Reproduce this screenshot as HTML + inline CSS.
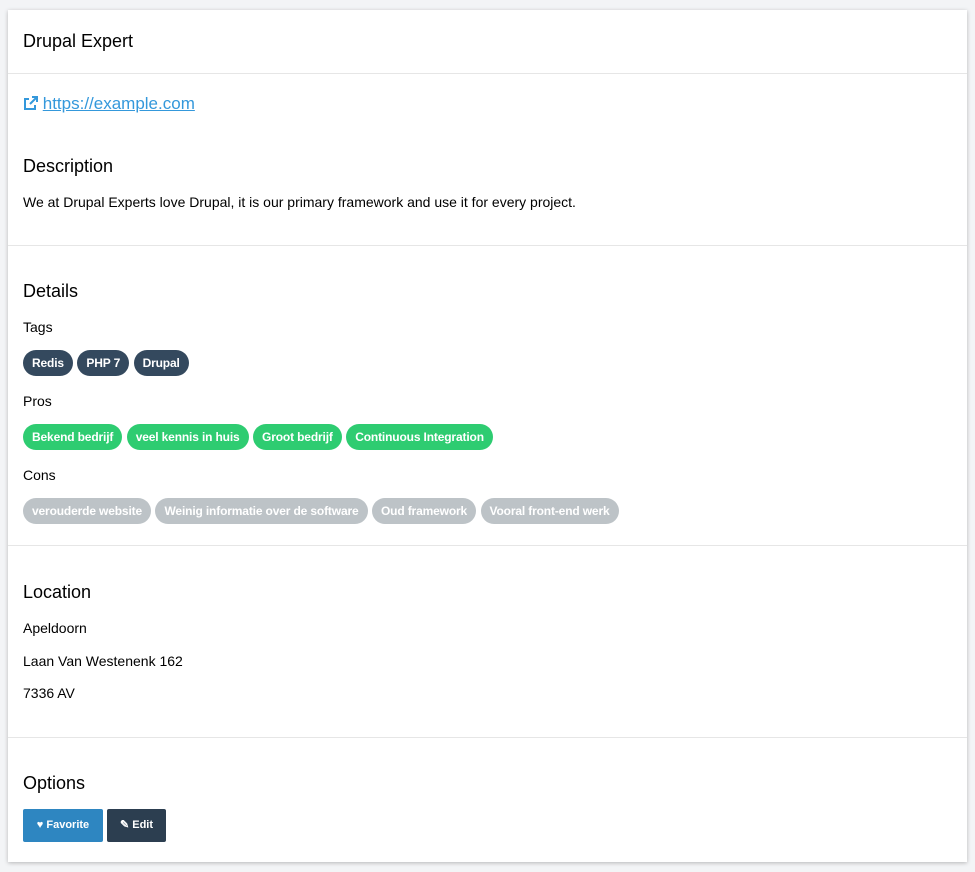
<!DOCTYPE html>
<html><head><style>
body{margin:0;background:#f3f4f6;font-family:"Liberation Sans",sans-serif;color:#000;}
.card{position:absolute;left:8px;top:10px;width:959px;height:852px;background:#fff;box-shadow:0 1px 4px rgba(0,0,0,.25);}
.a{position:absolute;left:15px;white-space:nowrap;}
.hr{position:absolute;left:0;right:0;height:1px;background:#e6e6e6;}
.h{font-size:18px;}
.t{font-size:14px;}
.b{display:inline-block;height:26px;line-height:26px;padding:0 9px;border-radius:13px;color:#fff;font-size:12px;font-weight:bold;letter-spacing:-0.15px;margin-right:0;}
.d{background:#34495e}.g{background:#2ecc71}.s{background:#bdc3c7}
.btn{position:absolute;top:799px;height:33px;line-height:33px;color:#fff;font-size:11px;font-weight:bold;border-radius:2px;text-align:center;}
</style></head><body>
<div class="card">
<div class="a h" style="top:21px;font-size:18px">Drupal Expert</div>
<div class="hr" style="top:63px"></div>
<div class="a" style="top:84px;font-size:17px;color:#3498db"><svg width="15" height="14" viewBox="0 0 15 14" style="vertical-align:-1px"><path d="M6 3H2v10h10V9" fill="none" stroke="#3498db" stroke-width="2"/><path d="M9 1h5v5M14 1L7 8" fill="none" stroke="#3498db" stroke-width="2"/></svg> <u>https://example.com</u></div>
<div class="a h" style="top:146px">Description</div>
<div class="a t" style="top:184px">We at Drupal Experts love Drupal, it is our primary framework and use it for every project.</div>
<div class="hr" style="top:235px"></div>
<div class="a h" style="top:271px">Details</div>
<div class="a t" style="top:309px">Tags</div>
<div class="a" style="top:340px"><span class="b d">Redis</span> <span class="b d">PHP 7</span> <span class="b d">Drupal</span></div>
<div class="a t" style="top:383px">Pros</div>
<div class="a" style="top:414px"><span class="b g">Bekend bedrijf</span> <span class="b g">veel kennis in huis</span> <span class="b g">Groot bedrijf</span> <span class="b g">Continuous Integration</span></div>
<div class="a t" style="top:457px">Cons</div>
<div class="a" style="top:488px"><span class="b s">verouderde website</span> <span class="b s">Weinig informatie over de software</span> <span class="b s">Oud framework</span> <span class="b s">Vooral front-end werk</span></div>
<div class="hr" style="top:535px"></div>
<div class="a h" style="top:572px">Location</div>
<div class="a t" style="top:610px">Apeldoorn</div>
<div class="a t" style="top:643px">Laan Van Westenenk 162</div>
<div class="a t" style="top:675px">7336 AV</div>
<div class="hr" style="top:727px"></div>
<div class="a h" style="top:763px">Options</div>
<div class="btn" style="left:15px;width:80px;background:#2e86c1">♥ Favorite</div>
<div class="btn" style="left:99px;width:59px;background:#2c3e50">✎ Edit</div>
</div>
</body></html>
